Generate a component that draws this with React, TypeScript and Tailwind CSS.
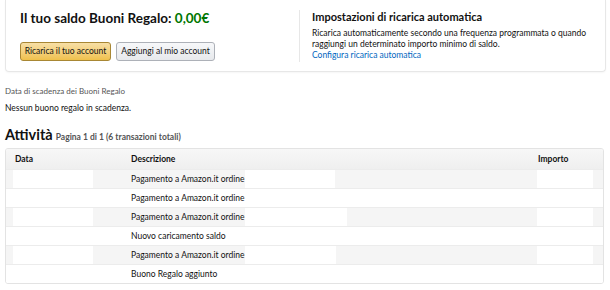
const rows = [
  { desc: "Pagamento a Amazon.it ordine", mask: 90, striped: true },
  { desc: "Pagamento a Amazon.it ordine", mask: 0, striped: false },
  { desc: "Pagamento a Amazon.it ordine", mask: 102, striped: true },
  { desc: "Nuovo caricamento saldo", mask: 0, striped: false },
  { desc: "Pagamento a Amazon.it ordine", mask: 91, striped: true },
  { desc: "Buono Regalo aggiunto", mask: 0, striped: false },
];

export default function App() {
  return (
    <div className="w-[610px] h-[290px] overflow-hidden bg-white text-[#111] font-['Lato',sans-serif]">
      {/* balance card */}
      <div className="mx-[5px] w-[601px] h-[72px] flex border border-t-0 border-[#e7e7e7] rounded-b-[4px] shadow-[0_1px_2px_rgba(0,0,0,0.04)]">
        <div className="w-[293px] pl-[14px] pt-[8px]">
          <h1 className="text-[13.5px] leading-[20px] font-bold">
            Il tuo saldo Buoni Regalo: <span className="text-[#007600]">0,00€</span>
          </h1>
          <div className="flex gap-[5px] mt-[14px]">
            <button className="w-[91px] h-[19px] rounded-[3px] border border-[#a88734] bg-gradient-to-b from-[#f7dfa5] to-[#f0c14b] text-[8.5px] text-[#111] leading-none whitespace-nowrap px-0">
              Ricarica il tuo account
            </button>
            <button className="w-[99px] h-[19px] rounded-[3px] border border-[#adb1b8] bg-gradient-to-b from-[#f7f8fa] to-[#e7e9ec] text-[8.5px] text-[#111] leading-none whitespace-nowrap px-0">
              Aggiungi al mio account
            </button>
          </div>
        </div>
        <div className="mt-[10px] h-[52px] border-l border-[#e7e7e7]" />
        <div className="pl-[12px] pt-[9px] flex-1">
          <h2 className="text-[11px] leading-[15px] font-bold">Impostazioni di ricarica automatica</h2>
          <p className="mt-[4px] text-[8.5px] leading-[11px] text-[#111] w-[275px]">
            Ricarica automaticamente secondo una frequenza programmata o quando raggiungi un determinato importo minimo di saldo.
          </p>
          <a className="block text-[8.5px] leading-[11px] text-[#0066c0]">Configura ricarica automatica</a>
        </div>
      </div>

      {/* expiry */}
      <div className="px-[5px] mt-[13px] text-[8px] leading-[12px] text-[#555]">Data di scadenza dei Buoni Regalo</div>
      <div className="px-[5px] mt-[5px] text-[8.5px] leading-[12px] text-[#111]">Nessun buono regalo in scadenza.</div>

      {/* activity */}
      <div className="px-[5px] mt-[11px] flex items-baseline gap-[3px]">
        <span className="text-[14.5px] leading-[20px] font-bold">Attività</span>
        <span className="text-[8.5px] font-bold text-[#555]">Pagina 1 di 1 (6 transazioni totali)</span>
      </div>

      <div className="mx-[5px] mt-[3px] w-[599px] border border-[#e3e3e3] rounded-[3px] overflow-hidden">
        <div className="flex h-[20px] items-center bg-gradient-to-b from-[#f7f7f7] to-[#efefef] text-[8.5px] font-bold">
          <div className="w-[116px] pl-[9px]">Data</div>
          <div className="w-[407px] pl-[9px]">Descrizione</div>
          <div className="pl-[9px]">Importo</div>
        </div>
        {rows.map((r, i) => (
          <div
            key={i}
            className={`flex h-[19px] items-stretch text-[8.5px] border-t border-[#ececec] ${r.striped ? "bg-[#f5f5f5]" : "bg-white"}`}
          >
            <div className="w-[116px] pl-[7px] flex items-stretch">
              {r.striped && <span className="w-[80px] bg-white" />}
            </div>
            <div className="w-[407px] pl-[9px] flex items-center">
              <span>{r.desc}</span>
              {r.mask > 0 && <span className="ml-[1px] self-stretch bg-white" style={{ width: r.mask }} />}
            </div>
            <div className="pl-[8px] flex items-stretch">
              {i < 5 && <span className="w-[56px] bg-white" />}
            </div>
          </div>
        ))}
      </div>
    </div>
  );
}
